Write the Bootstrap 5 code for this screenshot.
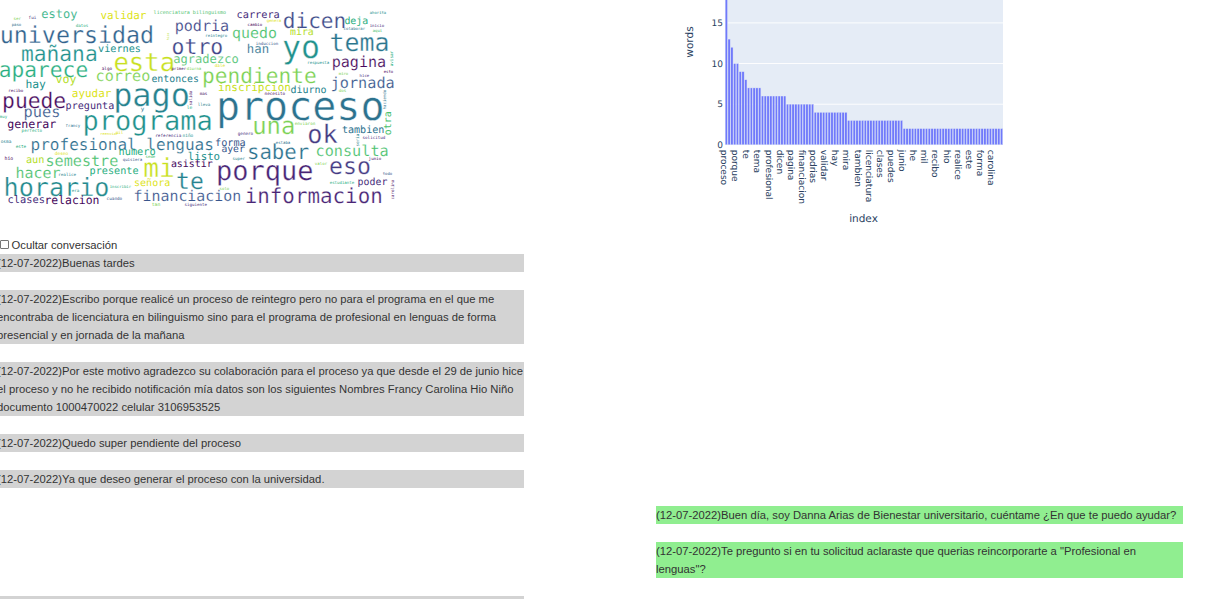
<!DOCTYPE html>
<html lang="es">
<head>
<meta charset="utf-8">
<title>Conversación</title>
<link href="https://cdn.jsdelivr.net/npm/bootstrap@5.3.0/dist/css/bootstrap.min.css" rel="stylesheet">
<style>
body{height:599px;overflow:hidden;font:11.25px/18px "Liberation Sans",Arial,sans-serif;color:#333;background:#fff}
.charts{height:236px}
.cloud{width:656px;font-family:"DejaVu Sans Mono",monospace;text-rendering:geometricPrecision}
.plot{font-family:"DejaVu Sans",Verdana,sans-serif;fill:#2a3f5f;text-rendering:geometricPrecision}
.toggle-row{height:18px}
.toggle-row .box{appearance:none;width:9px;height:9px;border:1px solid #767676;border-radius:1px;background:#fff;margin:-1px 2.5px 0 0}
.chat{margin-left:-3px}
.msg{width:527px;margin-bottom:18px}
.msg-in{background:#d3d3d3}
.msg-out{background:#90ee90;margin-left:659px}
.msg-next{height:3px;margin-bottom:0}
</style>
</head>
<body>
<div class="d-flex charts">
<svg id="cloud" class="cloud flex-shrink-0" width="656" height="236" role="img" aria-label="Nube de palabras"></svg>
<svg id="plot" class="plot flex-shrink-0" width="573" height="236" viewBox="656 0 573 236" role="img" aria-label="words / index"></svg>
</div>
<label class="toggle-row d-flex align-items-center"><input type="checkbox" class="box"><span>Ocultar conversación</span></label>
<main class="chat d-flex flex-column">
<div class="msg msg-in">(12-07-2022)Buenas tardes</div>
<div class="msg msg-in">(12-07-2022)Escribo porque realicé un proceso de reintegro pero no para el programa en el que me<br>encontraba de licenciatura en bilinguismo sino para el programa de profesional en lenguas de forma<br>presencial y en jornada de la mañana</div>
<div class="msg msg-in text-nowrap">(12-07-2022)Por este motivo agradezco su colaboración para el proceso ya que desde el 29 de junio hice<br>el proceso y no he recibido notificación mía datos son los siguientes Nombres Francy Carolina Hio Niño<br>documento 1000470022 celular 3106953525</div>
<div class="msg msg-in">(12-07-2022)Quedo super pendiente del proceso</div>
<div class="msg msg-in">(12-07-2022)Ya que deseo generar el proceso con la universidad.</div>
<div class="msg msg-out">(12-07-2022)Buen día, soy Danna Arias de Bienestar universitario, cuéntame ¿En que te puedo ayudar?</div>
<div class="msg msg-out">(12-07-2022)Te pregunto si en tu solicitud aclaraste que querias reincorporarte a "Profesional en<br>lenguas"?</div>
<div class="msg msg-in msg-next"></div>
</main>
<script>
const NS = 'http://www.w3.org/2000/svg';
function add(parent, tag, attrs, text) {
  const e = document.createElementNS(NS, tag);
  for (const k in attrs) e.setAttribute(k, attrs[k]);
  if (text !== undefined) e.textContent = text;
  parent.appendChild(e);
}
// viridis steps
const P='#46085c',V='#472d7b',I='#404688',B='#38588c',C='#2c728e',T='#26828e',S='#21918c',G='#28ae80',E='#4ac16d',L='#7ad151',M='#b5de2b',Y='#dde318';
// horizontal words: text, left, right, baseline, colour
const words = [
['estoy',42,77,18,G],['validar',101,146,19,Y],['ser',14,21,20,L],['fui',29,36,19,V],['paso',12,21,26,C],['datos',76,88,27,G],
['universidad',2,152,43,'#32648e'],['mañana',22,96,61,S],['viernes',98.5,140,52,S],['aparece',0,87,77,G],['hay',26.5,45.5,88,S],['voy',56,76,83.3,M],
['algo',102,112,70,P],['correo',97,149.5,81,L],['esta',115,173,71,'#c8e020'],['recibo',9,23,92,P],['ayudar',72.5,111,97,Y],['puede',4,65,108,P],['pago',116,188,106,T],
['licenciatura bilinguismo',154,226,14,E],['carrera',237.5,279,17.5,V],['podria',176,228,31.3,I],['cambio',248,262,26,P],['reintegro',206,227,37,T],['quedo',233,276,38,E],
['otro',173,222,54,I],['han',248,268,53,C],['induccion',256,278,44.5,B],['agradezco',174,238,63,E],['dale',215,225,67,Y],['primer',172,186,70,P],['diurna',187,201,70,L],
['entonces',152,198,82,T],['pendiente',204,315.5,83,L],['inscripcion',219,290,91,'#c8e020'],['mas',200,207,95,P],['lleva',198,210,106,T],
['dicen',284,344.5,28,'#3e4c8a'],['deja',345,367.5,24,G],['genera',267,281,22,Y],['mira',290.5,313,35,M],['ahorita',370,386,14,S],['inicio',370,384,27,V],['aqui',373,382,32,E],['colaborar',344,365,30,C],
['yo',283.5,318,57.5,S],['tema',331,387.5,51,'#2a768e'],['respuesta',308,329,64,S],['pagina',333,385,67,P],['esto',384,393,73,P],['miro',339,348,75,L],['hice',360,369,77,V],
['jornada',332,393.5,88,B],['diurno',291,326,93,T],['dos',339,346,92,L],['necesito',265,285,95,P],
['pues',25,59,117,B],['pregunta',66.5,113.5,109,V],['generar',8,56,128,P],['muy',0,7,118,G],['perfecto',22,42,132,G],['francy',66,80,127,C],['programa',85,210.5,130,S],
['reenviar',101,118,135,Y],['mil',116,123,134,Y],['profesional lenguas',32,212.5,150,'#2e6e8e'],['osma',1,11,143,T],['este',16,26,148,G],['deseo',55,68,155,Y],['hio',5,13,160,P],
['aun',26.5,43.5,163,M],['semestre',47,117.5,165.5,E],['numero',119.5,155,155,G],['quisiera',123,142,161,B],['hacer',17,60,178,E],['realice',59,76,176,T],['presente',90.5,138,174.3,G],
['horario',6,108,196,'#238a8d'],['era',72,79,192,S],['inscribir',110,131,188,G],['clases',8.5,44,203,V],['relacion',46.5,98.5,204,P],['cuando',107,122,200,B],
['y',141,144,111,C],['le',187,192,109,G],['proceso',219.5,382,120,C],['referencia',156,181,136.5,V],['niño',183,193,136.5,S],['genero',238,253,135,V],['una',254.5,293.5,134,L],
['forma',216,245,146,B],['ayer',222,244.5,152.3,B],['sede',146,155,158,E],['listo',188.5,219.5,159.5,S],['asistir',171.5,212.5,167,P],['super',233,245,160,T],['saber',249,308.5,159,C],
['mi',144.5,173,177,'#c8e020'],['te',177.5,202.5,189,T],['señora',135,169.5,186,Y],['porque',218.5,312,180,'#482475'],['solo',220,229,190,L],['financiacion',135,240,201,'#39558c'],
['informacion',246.5,381,203.3,'#482475'],['tan',152,160,205.5,L],['siguiente',185,207,205.5,V],
['enviaron',295,315,125,L],['ok',309,337.5,142.5,'#443a83'],['tambien',342.5,383.5,133,C],['solicitud',363,385,139,V],['estaba',276,290,144,C],
['consulta',317,387.5,156,E],['junio',369,381,160,P],['valor',315,327,165,L],['eso',330.5,369.5,174,'#443a83'],['poder',358.5,387,185,V],['todo',383,392,175,B],['estudiante',330,354,184,G]];
// upright words read bottom to top: text, top, bottom, baseline x, colour
const upright = [['hizo',33,40,168.5,M],['salida',91,105,192,P],['avisar',51,66,392.5,G],['haciendo',90,109,386,C],['otra',112,134.5,391,E],['seria',134,146,359,T],['carolina',180,199,394,P]];
const cloud = document.getElementById('cloud');
// ink extents of a word at 1px font size, for fitting it between two edges
const pen = document.createElement('canvas').getContext('2d');
pen.font = '200px "DejaVu Sans Mono", monospace';
function fit(word, length) {
  const m = pen.measureText(word);
  const size = length * 200 / (m.actualBoundingBoxRight + m.actualBoundingBoxLeft);
  return {size, shift: m.actualBoundingBoxLeft * size / 200};
}
const thin = s => s > 12 ? {stroke:'#fff','stroke-width':s*.011} : {};
for (const [w,l,r,b,c] of words) {
  const f = fit(w, r-l);
  add(cloud,'text',{x:l+f.shift,y:b,'font-size':f.size,fill:c,...thin(f.size)},w);
}
for (const [w,t,b,x,c] of upright) {
  const f = fit(w, b-t);
  add(cloud,'text',{transform:`translate(${x} ${b-f.shift}) rotate(-90)`,'font-size':f.size,fill:c},w);
}
// bar chart
const plot = document.getElementById('plot'), x0=725, y0=144.8, unit=8.13, pitch=2.78;
add(plot,'rect',{x:x0,y:0,width:278,height:y0,fill:'#e5ecf6'});
for (const v of [5,10,15]) add(plot,'rect',{x:x0,y:y0-v*unit-.4,width:278,height:.9,fill:'#fff'});
const runs=[[19,1],[13,1],[12,1],[10,2],[9,2],[8,1],[7,5],[6,9],[5,10],[4,12],[3,20],[2,36]];
let i=0;
for (const [v,n] of runs) for (let k=0;k<n;k++,i++)
  add(plot,'rect',{x:x0+i*pitch+.2,y:y0-v*unit,width:2.3,height:v*unit,fill:'#7079fb',stroke:'#e5ecf6','stroke-width':.5,'stroke-opacity':.8});
for (const v of [0,5,10,15]) add(plot,'text',{x:723,y:y0-v*unit+3.3,'font-size':9,'text-anchor':'end'},v);
['proceso','porque','te','tema','profesional','dicen','pagina','financiacion','podrias','validar','hay','mira','tambien','licenciatura','clases','puedes','junio','he','mil','recibo','hio','realice','este','forma','carolina']
 .forEach((w,j)=>add(plot,'text',{transform:`translate(${721.1+j*11.12} 149.7) rotate(90)`,'font-size':9},w));
add(plot,'text',{x:863.5,y:222,'font-size':10.5,'text-anchor':'middle'},'index');
add(plot,'text',{transform:'translate(693 42) rotate(-90)','font-size':10.5,'text-anchor':'middle'},'words');
</script>
<script src="https://cdn.jsdelivr.net/npm/bootstrap@5.3.0/dist/js/bootstrap.bundle.min.js"></script>
</body>
</html>
